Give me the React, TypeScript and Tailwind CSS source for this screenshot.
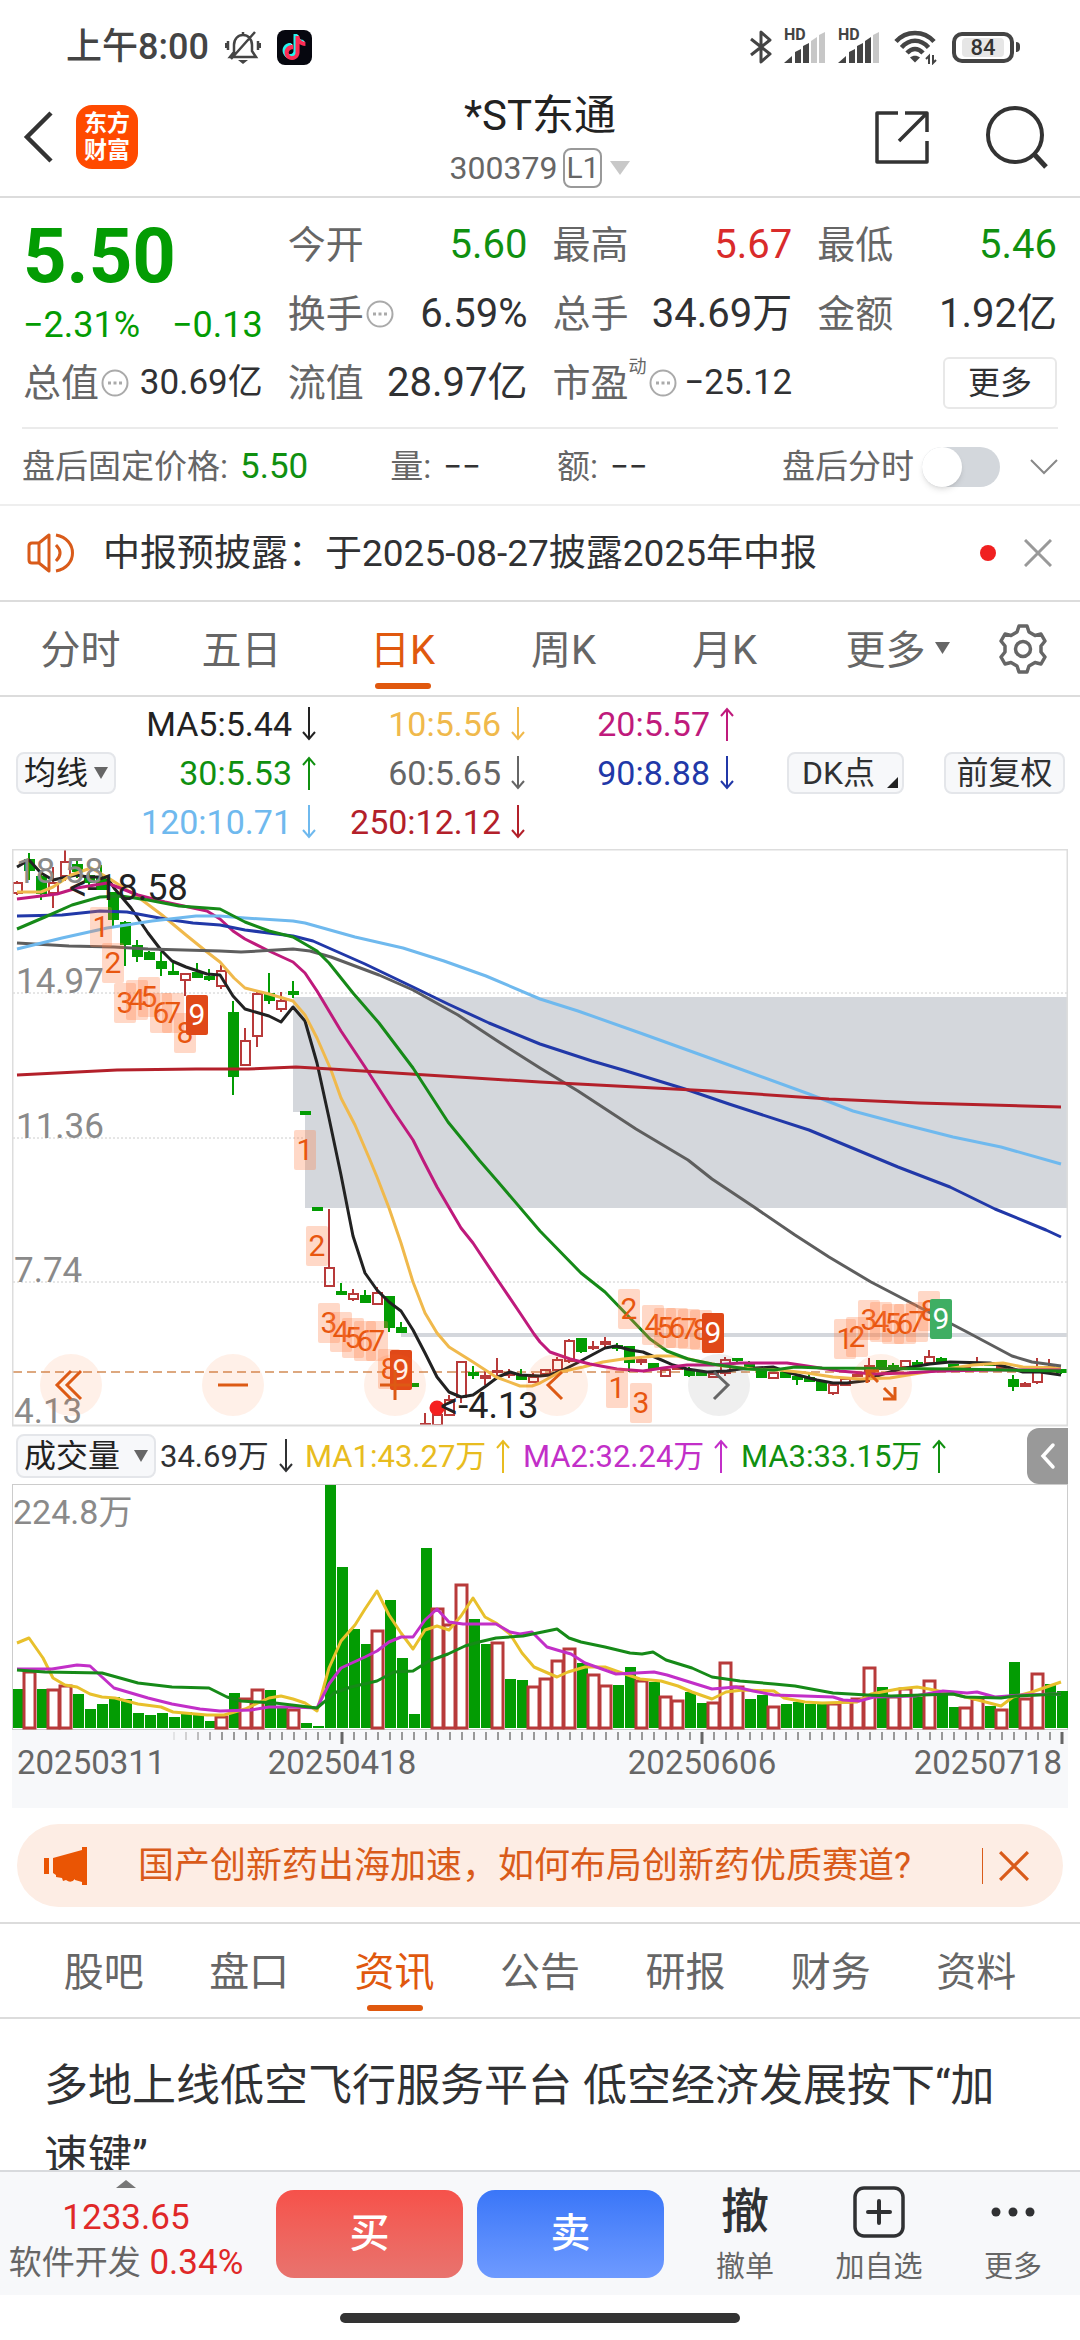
import { useState, type ReactNode } from 'react';
import { SiTiktok } from 'react-icons/si';

// ─── Data ─────────────────────────────────────────────────────────────────────

type Candle = [kind: 'r' | 'g', high: number, top: number, bottom: number, low: number];

const CANDLES: Candle[] = [
  ['r', 881, 883, 893, 895], ['g', 853, 860, 870, 880], ['g', 873, 877, 893, 900], ['r', 867, 883, 893, 908],
  ['r', 849, 862, 876, 881], ['g', 858, 865, 871, 878], ['g', 872, 876, 882, 885], ['g', 865, 877, 889, 890],
  ['g', 893, 893, 919, 927], ['g', 921, 923, 944, 966], ['g', 940, 946, 956, 962], ['g', 951, 953, 959, 959],
  ['g', 952, 962, 968, 976], ['g', 963, 972, 974, 975], ['r', 974, 974, 980, 996], ['g', 963, 973, 977, 978],
  ['g', 969, 977, 979, 981], ['r', 965, 971, 986, 989], ['g', 1001, 1013, 1076, 1095], ['r', 1028, 1041, 1065, 1065],
  ['r', 991, 994, 1036, 1047], ['g', 973, 994, 1000, 1004], ['r', 992, 1001, 1009, 1012], ['g', 981, 992, 994, 998],
  ['g', 1112, 1112, 1114, 1114], ['g', 1208, 1208, 1210, 1210], ['r', 1209, 1268, 1286, 1286], ['g', 1283, 1292, 1294, 1294],
  ['r', 1289, 1294, 1299, 1301], ['g', 1290, 1296, 1302, 1303], ['r', 1287, 1293, 1304, 1304], ['g', 1297, 1297, 1327, 1332],
  ['g', 1322, 1328, 1332, 1332], ['g', 1384, 1384, 1386, 1386], ['r', 1413, 1424, 1425, 1425], ['r', 1414, 1415, 1425, 1426],
  ['r', 1395, 1400, 1415, 1416], ['r', 1361, 1362, 1397, 1403], ['g', 1366, 1373, 1375, 1379], ['r', 1371, 1376, 1378, 1385],
  ['r', 1358, 1371, 1372, 1376], ['r', 1369, 1373, 1375, 1378], ['g', 1369, 1375, 1379, 1380], ['r', 1373, 1377, 1382, 1382],
  ['r', 1369, 1370, 1374, 1375], ['r', 1357, 1360, 1370, 1372], ['r', 1339, 1341, 1361, 1363], ['g', 1339, 1339, 1351, 1353],
  ['r', 1341, 1347, 1348, 1350], ['r', 1337, 1342, 1344, 1348], ['g', 1343, 1346, 1348, 1351], ['g', 1347, 1347, 1362, 1372],
  ['r', 1358, 1360, 1362, 1365], ['g', 1363, 1364, 1369, 1370], ['r', 1368, 1370, 1376, 1376], ['r', 1366, 1367, 1369, 1370],
  ['g', 1367, 1370, 1375, 1377], ['g', 1372, 1373, 1375, 1376], ['r', 1373, 1374, 1377, 1377], ['r', 1357, 1360, 1373, 1376],
  ['g', 1358, 1359, 1360, 1363], ['g', 1361, 1365, 1367, 1368], ['g', 1368, 1370, 1377, 1377], ['r', 1372, 1373, 1378, 1378],
  ['g', 1370, 1373, 1377, 1377], ['g', 1376, 1377, 1379, 1385], ['g', 1374, 1378, 1381, 1382], ['g', 1382, 1382, 1390, 1391],
  ['r', 1383, 1385, 1393, 1395], ['r', 1377, 1379, 1385, 1385], ['r', 1373, 1375, 1376, 1377], ['r', 1358, 1366, 1373, 1382],
  ['g', 1360, 1361, 1369, 1370], ['g', 1363, 1366, 1368, 1369], ['r', 1360, 1361, 1367, 1367], ['g', 1360, 1363, 1365, 1366],
  ['r', 1350, 1357, 1363, 1364], ['g', 1357, 1359, 1361, 1363], ['g', 1364, 1365, 1367, 1368], ['r', 1367, 1368, 1369, 1370],
  ['r', 1357, 1363, 1365, 1366], ['g', 1362, 1363, 1365, 1366], ['r', 1366, 1367, 1369, 1370], ['g', 1375, 1380, 1386, 1391],
  ['r', 1382, 1384, 1386, 1387], ['r', 1358, 1372, 1382, 1384], ['r', 1359, 1367, 1371, 1372], ['g', 1369, 1370, 1372, 1374],
];

const PRICE_LINES: { color: string; points: string }[] = [
  { color: '#222', points: '17,867 29,860 41,873 53,880 76,875 88,877 107,877 114,888 131,908 148,933 161,950 172,961 186,967 207,974 220,975 233,996 245,1009 269,1016 281,1022 293,1007 305,1021 317,1063 329,1118 341,1175 353,1236 365,1273 377,1290 389,1302 401,1311 413,1330 425,1353 437,1377 449,1392 461,1397 473,1395 486,1386 498,1377 510,1372 520,1375 540,1376 550,1375 563,1370 577,1363 590,1356 605,1348 616,1346 630,1350 643,1352 657,1358 673,1365 687,1369 707,1372 727,1371 740,1369 773,1367 790,1373 817,1380 833,1383 847,1383 863,1381 880,1375 900,1369 930,1364 950,1362 990,1363 1007,1367 1023,1372 1040,1372 1061,1375' },
  { color: '#f0b94c', points: '17,892 41,892 53,887 71,875 91,868 110,879 138,897 162,915 186,935 207,952 220,962 234,978 245,988 269,994 293,1001 305,1015 317,1038 331,1070 341,1098 355,1125 370,1160 377,1177 389,1208 401,1243 413,1282 425,1313 437,1333 449,1347 473,1362 496,1377 520,1386 532,1386 540,1383 560,1372 583,1367 603,1362 623,1359 657,1356 677,1356 697,1361 723,1366 753,1369 780,1370 807,1373 833,1377 860,1379 890,1378 920,1373 953,1368 973,1365 1003,1363 1023,1367 1061,1368' },
  { color: '#bf1a7c', points: '17,899 57,894 77,888 107,883 138,895 165,902 207,911 220,919 233,931 245,939 269,951 293,962 305,973 317,991 341,1031 365,1067 394,1112 413,1140 423,1160 437,1187 461,1228 473,1243 499,1282 520,1313 534,1334 540,1342 550,1352 570,1359 590,1364 617,1369 643,1371 663,1368 687,1365 713,1365 740,1363 787,1363 807,1366 840,1371 873,1374 907,1373 940,1371 990,1370 1061,1370' },
  { color: '#5e5e5e', points: '17,943 69,946 114,947 148,949 220,951 241,952 293,949 310,951 331,957 379,975 413,990 458,1015 499,1042 540,1068 578,1091 636,1129 688,1160 712,1179 754,1207 795,1235 829,1257 871,1282 919,1307 967,1332 1012,1356 1032,1362 1061,1366' },
  { color: '#2138a8', points: '17,916 62,915 100,911 127,912 165,919 193,923 220,925 245,930 293,936 313,941 365,964 413,987 448,1004 489,1023 540,1044 592,1061 623,1070 685,1089 729,1104 809,1130 898,1167 950,1187 995,1209 1046,1230 1061,1237' },
  { color: '#6fb9ee', points: '17,949 62,938 107,928 152,921 196,916 220,916 245,918 293,921 305,923 355,937 403,948 444,961 486,976 540,999 578,1011 643,1034 729,1065 809,1094 853,1111 898,1123 953,1137 1001,1147 1061,1164' },
  { color: '#b3202a', points: '17,1075 117,1070 196,1069 248,1069 296,1067 331,1069 540,1082 712,1091 829,1099 919,1103 1061,1107' },
  { color: '#168a18', points: '17,929 45,917 72,905 100,897 121,896 148,900 179,906 220,909 245,922 269,931 293,937 317,951 329,963 353,993 379,1023 413,1068 448,1122 479,1160 499,1183 540,1231 581,1273 605,1292 630,1318 650,1339 667,1351 688,1359 712,1364 747,1369 774,1370 795,1367 822,1368 953,1369 1061,1371' },
];

const MARKERS: [label: number, index: number, top: number, fill?: string][] = [
  [1, 7, 907], [2, 8, 943], [3, 9, 983], [4, 10, 980], [5, 11, 977], [6, 12, 993], [7, 13, 993], [8, 14, 1013], [9, 15, 995, '#e04818'],
  [1, 24, 1130], [2, 25, 1226], [3, 26, 1303], [4, 27, 1312], [5, 28, 1318], [6, 29, 1321], [7, 30, 1321], [8, 31, 1349], [9, 32, 1350, '#e04818'],
  [1, 50, 1368], [2, 51, 1289], [3, 52, 1383], [4, 53, 1305], [5, 54, 1308], [6, 55, 1308], [7, 56, 1309], [8, 57, 1310], [9, 58, 1313, '#e04818'],
  [1, 69, 1319], [2, 70, 1317], [3, 71, 1300], [4, 72, 1302], [5, 73, 1304], [6, 74, 1304], [7, 75, 1302], [8, 76, 1291], [9, 77, 1299, '#3fae63'],
];

const VOLUME_KINDS =
  'grgrrggggggggggggrgrrggrggggggrgggg' + 'rrrggrggrrrrgrrggrgrrggrrrggrggggrrrrgrrgrggrrgrgrrgg';

const VOLUME_TOPS = [
  1689, 1672, 1689, 1690, 1686, 1694, 1709, 1704, 1697, 1699, 1713, 1715, 1713, 1717, 1712, 1715, 1721, 1717, 1693, 1699,
  1690, 1690, 1707, 1710, 1723, 1726, 1485, 1567, 1629, 1644, 1631, 1600, 1658, 1714, 1548, 1609, 1625, 1585, 1619, 1644,
  1643, 1679, 1680, 1687, 1679, 1661, 1649, 1663, 1675, 1686, 1685, 1667, 1681, 1682, 1697, 1701, 1692, 1703, 1703, 1663,
  1687, 1699, 1695, 1707, 1704, 1702, 1704, 1702, 1704, 1702, 1699, 1668, 1687, 1697, 1689, 1697, 1681, 1694, 1707, 1708,
  1699, 1706, 1710, 1662, 1699, 1674, 1684, 1691,
];

const VOLUME_LINES: { color: string; points: string }[] = [
  { color: '#e8c02c', points: '17,1643 29,1638 43,1658 53,1678 65,1685 77,1687 90,1694 102,1697 115,1698 138,1704 161,1707 173,1712 207,1715 224,1715 245,1709 258,1703 269,1698 281,1696 293,1699 305,1703 317,1711 329,1668 341,1641 355,1625 365,1609 377,1591 389,1615 401,1633 413,1649 425,1630 437,1626 449,1630 461,1616 473,1598 485,1617 496,1623 510,1634 522,1653 534,1667 557,1677 568,1672 585,1667 605,1667 619,1672 640,1679 661,1681 678,1686 692,1692 712,1699 726,1692 743,1690 774,1691 784,1698 805,1702 822,1703 857,1702 871,1694 898,1689 917,1687 929,1689 953,1694 974,1699 1001,1706 1013,1697 1032,1692 1061,1682' },
  { color: '#c22fc8', points: '17,1669 52,1669 77,1665 90,1666 102,1677 114,1688 148,1698 172,1704 200,1709 220,1711 251,1710 269,1707 293,1707 317,1708 329,1684 341,1668 365,1657 377,1651 389,1642 401,1637 413,1637 425,1620 437,1609 449,1622 463,1624 496,1624 510,1632 520,1634 532,1632 547,1647 557,1650 571,1654 585,1663 616,1674 636,1673 654,1672 667,1675 712,1689 736,1687 753,1691 774,1695 833,1697 843,1700 859,1701 874,1697 915,1696 943,1691 967,1693 977,1692 995,1697 1022,1695 1061,1694' },
  { color: '#168a18', points: '17,1670 45,1672 102,1673 138,1683 172,1687 209,1688 227,1697 241,1701 275,1703 317,1708 324,1702 334,1693 351,1687 377,1681 394,1672 413,1671 429,1661 448,1654 465,1646 479,1642 496,1638 523,1636 557,1629 569,1638 581,1642 605,1647 630,1653 642,1654 653,1652 666,1660 692,1668 712,1677 740,1681 774,1684 795,1686 833,1693 867,1695 891,1696 953,1694 965,1697 1001,1698 1015,1696 1061,1694' },
];

const AVERAGES: { label: string; cls: string; up: boolean }[] = [
  { label: 'MA5:5.44', cls: 'text-[#222222]', up: false },
  { label: '10:5.56', cls: 'text-[#f0b94c]', up: false },
  { label: '20:5.57', cls: 'text-[#bf1a7c]', up: true },
  { label: '30:5.53', cls: 'text-[#109010]', up: true },
  { label: '60:5.65', cls: 'text-[#666666]', up: false },
  { label: '90:8.88', cls: 'text-[#2138a8]', up: false },
  { label: '120:10.71', cls: 'text-[#6fb9ee]', up: false },
  { label: '250:12.12', cls: 'text-[#b3202a]', up: false },
];

const RED = '#b83a3a';
const GREEN = '#039c03';
const xAt = (i: number) => 17 + i * 12;

// ─── App ──────────────────────────────────────────────────────────────────────

export default function App() {
  return (
    <div className="flex h-screen flex-col overflow-hidden bg-white font-[Roboto,'Noto_Sans_CJK_SC',sans-serif] leading-none text-[#303133]">
      <StatusBar />
      <Header />
      <main className="min-h-0 flex-1 overflow-y-auto [scrollbar-width:none]">
        <Quote />
        <AfterHours />
        <Notice />
        <PeriodTabs />
        <Averages />
        <PriceChart />
        <VolumePanel />
        <Banner />
        <InfoTabs />
        <article className="px-11 pt-8">
          <h2 className="text-[44px] leading-[71px]">多地上线低空飞行服务平台 低空经济发展按下“加速键”</h2>
        </article>
      </main>
      <TradeBar />
    </div>
  );
}

// ─── Top bars ─────────────────────────────────────────────────────────────────

function StatusBar() {
  return (
    <div className="flex h-[90px] shrink-0 items-center justify-between pr-[60px] pl-[66px] pt-1 text-[#444444]">
      <div className="flex items-center gap-4">
        <span className="text-4xl leading-none font-medium">上午8:00</span>
        <svg className="size-[36px]" viewBox="0 0 36 36" fill="none" stroke="currentColor" strokeWidth="2.5" aria-hidden="true">
          <path d="M18 3v3M9 26V16c0-6 4-10 9-10s9 4 9 10v6l4 6H5l4-5M30 3 6 30M3 12v9M33 12v9M0.8 14v5M35.2 14v5" />
          <path d="M13 31h10l-5 4z" fill="currentColor" stroke="none" />
        </svg>
        <span className="grid size-[35px] place-items-center rounded-lg bg-[#06070f]">
          <SiTiktok className="col-start-1 row-start-1 size-6 -translate-x-px -translate-y-px text-[#25f4ee]" aria-hidden="true" />
          <SiTiktok className="col-start-1 row-start-1 size-6 translate-x-px translate-y-px text-[#fe2c55]" aria-hidden="true" />
          <SiTiktok className="col-start-1 row-start-1 size-6 text-white" aria-hidden="true" />
        </span>
      </div>
      <div className="flex items-center">
        <svg className="h-9 w-[22px]" viewBox="0 0 22 36" fill="none" stroke="currentColor" strokeWidth="3" strokeLinejoin="round" aria-hidden="true">
          <path d="M1 10l19 15-9 8V3l9 8L1 26" />
        </svg>
        <Signal bars={3} />
        <Signal bars={4} />
        <svg className="ml-[14px] h-[36px] w-[44px]" viewBox="0 0 44 36" fill="none" stroke="currentColor" strokeWidth="4.5" aria-hidden="true">
          <path d="M2 12.500C12 1 30 1 40 12.500M7.500 18.500c8-9 19-9 27 0M13 24c5-5.500 11-5.500 16 0" />
          <path d="M16 28.500c3-2.500 7-2.500 10 0l-5 5z" fill="currentColor" stroke="none" />
          <path d="M35 35v-8l-3 3M39 26v8l3-3" strokeWidth="2" />
        </svg>
        <div className="ml-[14px] grid h-[31px] w-[62px] place-items-center rounded-[10px] border-4 border-current">
          <span className="w-[42px] rounded-sm bg-[#e6e6e6] text-center text-[22px] leading-[19px] font-medium text-[#333333]">84</span>
        </div>
        <span className="ml-0.5 h-2.5 w-1 rounded-r bg-current" />
      </div>
    </div>
  );
}

function Signal({ bars }: { bars: number }) {
  return (
    <div className="relative ml-3 h-[36px] w-[42px]">
      <svg className="absolute inset-0 size-full" viewBox="0 0 42 36" fill="currentColor" aria-hidden="true">
        <path d="M0 34l8-7v7z" />
        <path d="M11 23l6-3v14h-6z" />
        <path d="M19 17l6-3v20h-6z" />
        <path d="M27 12l6-4v26h-6z" opacity={bars > 3 ? 1 : 0.3} />
        <path d="M35 6l6-3v31h-6z" opacity="0.3" />
      </svg>
      <span className="absolute top-0 left-0 text-[16px] leading-3 font-bold">HD</span>
    </div>
  );
}

function Header() {
  return (
    <header className="relative flex h-[108px] shrink-0 items-center justify-between border-b-2 border-[#dcdcdc] pr-[30px] pb-3 pl-[22px]">
      <div className="flex items-center gap-[22px]">
        <button type="button" aria-label="返回">
          <svg className="h-[52px] w-8" viewBox="0 0 32 52" fill="none" stroke="#333" strokeWidth="4.5" aria-hidden="true">
            <path d="M29 2 5 26l24 24" />
          </svg>
        </button>
        <div className="flex h-[64px] w-[62px] flex-col items-center justify-center rounded-2xl bg-[#ff4a00] text-[23px] leading-[27px] font-bold text-white">
          <span>东方</span>
          <span>财富</span>
        </div>
      </div>
      <div className="absolute inset-x-0 top-1 mx-auto flex w-80 flex-col items-center">
        <h1 className="text-[42px] leading-[44px] text-[#222222]">*ST东通</h1>
        <button type="button" className="mt-2.5 flex items-center text-[32px] leading-[40px] text-[#666666]">
          300379
          <span className="ml-1.5 rounded-lg border-2 border-[#999999] px-px text-[30px] leading-[36px]">L1</span>
          <svg className="ml-2 h-[14px] w-5" viewBox="0 0 20 14" aria-hidden="true">
            <path d="M0 0h20L10 14z" fill="#c8c8c8" />
          </svg>
        </button>
      </div>
      <div className="flex items-center gap-[54px]">
        <button type="button" aria-label="分享">
          <svg className="size-[56px]" viewBox="0 0 56 56" fill="none" stroke="#333" strokeWidth="3.500" strokeLinejoin="round" aria-hidden="true">
            <path d="M24 4H3v49h50V32M31 4h22v19M53 4 25 32" />
          </svg>
        </button>
        <button type="button" aria-label="搜索">
          <svg className="size-[66px]" viewBox="0 0 66 66" fill="none" stroke="#333" strokeWidth="4" aria-hidden="true">
            <circle cx="31" cy="31" r="27" />
            <path d="M50 50l12 13" strokeWidth="5" />
          </svg>
        </button>
      </div>
    </header>
  );
}

// ─── Quote ────────────────────────────────────────────────────────────────────

function InfoDot() {
  return (
    <svg className="ml-0.5 size-7 shrink-0" viewBox="0 0 28 28" fill="none" stroke="#aaa" strokeWidth="2" aria-hidden="true">
      <circle cx="14" cy="14" r="12.500" />
      <path d="M7 14h3M12.500 14h3M18 14h3" strokeWidth="3" />
    </svg>
  );
}

function Cell({ label, info, sup, children, cls = 'text-[40px]' }: {
  label: string; info?: boolean; sup?: string; children: ReactNode; cls?: string;
}) {
  return (
    <div className="flex items-center">
      <span className="text-[38px] whitespace-nowrap text-[#666666]">{label}</span>
      {sup && <sup className="-top-4 text-lg leading-none text-[#666666]">{sup}</sup>}
      {info && <InfoDot />}
      <span className={`ml-auto whitespace-nowrap ${cls}`}>{children}</span>
    </div>
  );
}

function Quote() {
  return (
    <section className="px-[23px]">
      <div className="grid auto-rows-[69px] grid-cols-4 gap-x-[25px] pt-3 pb-2.5">
        <div className="row-span-2 text-[#039c03]">
          <div className="text-[76px] leading-[92px] font-bold">5.50</div>
          <div className="flex justify-between text-4xl leading-[46px]">
            <span>−2.31%</span>
            <span>−0.13</span>
          </div>
        </div>
        <Cell label="今开" cls="text-[40px] text-[#109010]">5.60</Cell>
        <Cell label="最高" cls="text-[40px] text-[#d92b2b]">5.67</Cell>
        <Cell label="最低" cls="text-[40px] text-[#109010]">5.46</Cell>
        <Cell label="换手" info>6.59%</Cell>
        <Cell label="总手">34.69万</Cell>
        <Cell label="金额">1.92亿</Cell>
        <Cell label="总值" info cls="text-[35px]">30.69亿</Cell>
        <Cell label="流值">28.97亿</Cell>
        <Cell label="市盈" sup="动" info cls="text-[35px]">−25.12</Cell>
        <button type="button" className="h-[52px] w-[114px] self-center justify-self-end rounded-md border-2 border-[#e8e8e8] text-[32px]">
          更多
        </button>
      </div>
    </section>
  );
}

function AfterHours() {
  const [on, setOn] = useState(false);
  return (
    <section className="border-b-2 border-[#eeeeee]">
      <div className="mx-[22px] flex h-[77px] items-center border-t-2 border-[#ebebeb] text-[33px] text-[#666666]">
        <span>盘后固定价格:</span>
        <span className="ml-3 text-[35px] text-[#109010]">5.50</span>
        <span className="ml-[82px]">量:</span>
        <span className="ml-3 text-[#333333]">−−</span>
        <span className="ml-[76px]">额:</span>
        <span className="ml-3 text-[#333333]">−−</span>
        <label htmlFor="after-hours" className="ml-auto">盘后分时</label>
        <span className="relative ml-2 h-[40px] w-[78px]">
          <input
            id="after-hours"
            type="checkbox"
            checked={on}
            onChange={(e) => setOn(e.target.checked)}
            className="peer size-full appearance-none rounded-full bg-[#d3d7dc] checked:bg-[#e0580e]"
          />
          <span className="pointer-events-none absolute top-0 left-0 size-10 rounded-full bg-white shadow-md peer-checked:left-auto peer-checked:right-0" />
        </span>
        <button type="button" aria-label="展开" className="ml-[30px]">
          <svg className="h-4 w-7" viewBox="0 0 28 16" fill="none" stroke="#888" strokeWidth="2" aria-hidden="true">
            <path d="M1 1l13 13L27 1" />
          </svg>
        </button>
      </div>
    </section>
  );
}

function Notice() {
  return (
    <section className="flex h-[96px] items-center border-b-2 border-[#dcdcdc] pr-[28px] pl-[27px]">
      <svg className="h-[42px] w-[48px]" viewBox="0 0 48 42" fill="none" stroke="#d95b1a" strokeWidth="3" strokeLinejoin="round" aria-hidden="true">
        <path d="M22 3v36L12 31H5q-3 0-3-3V14q0-3 3-3h7zM12 11v20M29 13q8 8 0 16M29 3c22 4 22 32 0 36" />
      </svg>
      <p className="ml-[28px] text-[37px]">中报预披露：于2025-08-27披露2025年中报</p>
      <span className="ml-auto size-4 rounded-full bg-[#f02020]" />
      <button type="button" aria-label="关闭" className="ml-7">
        <CloseIcon cls="size-7 text-[#999999]" />
      </button>
    </section>
  );
}

function CloseIcon({ cls }: { cls: string }) {
  return (
    <svg className={cls} viewBox="0 0 28 28" fill="none" stroke="currentColor" strokeWidth="3" aria-hidden="true">
      <path d="M1 1l26 26M27 1 1 27" />
    </svg>
  );
}

// ─── Tabs ─────────────────────────────────────────────────────────────────────

function Tab({ label, active, onClick, children }: {
  label: string; active: boolean; onClick: () => void; children?: ReactNode;
}) {
  return (
    <button
      type="button"
      role="tab"
      aria-selected={active}
      onClick={onClick}
      className={`relative flex h-full flex-1 items-center justify-center pt-1 text-[40px] ${active ? 'text-[#e0580e]' : 'text-[#666666]'}`}
    >
      {label}
      {children}
      {active && <span className="absolute bottom-1.5 left-1/2 h-1.5 w-14 -translate-x-1/2 rounded-full bg-[#e0580e]" />}
    </button>
  );
}

function PeriodTabs() {
  const [active, setActive] = useState('日K');
  return (
    <nav role="tablist" className="flex h-[95px] items-center border-b-2 border-[#dcdcdc]">
      {['分时', '五日', '日K', '周K', '月K', '更多'].map((label) => (
        <Tab key={label} label={label} active={label === active} onClick={() => setActive(label)}>
          {label === '更多' && (
            <svg className="absolute top-10 right-4 h-3 w-[15px]" viewBox="0 0 15 12" aria-hidden="true">
              <path d="M0 0h15L7.500 12z" fill="#666" />
            </svg>
          )}
        </Tab>
      ))}
      <button type="button" aria-label="设置" className="grid w-[114px] place-items-center">
        <svg className="h-[50px] w-[48px]" viewBox="0 0 48 50" fill="none" stroke="#666" strokeWidth="3.500" strokeLinejoin="round" aria-hidden="true">
          <path d="M20 2h8l2 6 6 3.500 6-1.500 4 7-4 5v6l4 5-4 7-6-1.500-6 3.500-2 6h-8l-2-6-6-3.500-6 1.500-4-7 4-5v-6l-4-5 4-7 6 1.500L18 8z" />
          <circle cx="24" cy="25" r="7.500" />
        </svg>
      </button>
    </nav>
  );
}

function InfoTabs() {
  const [active, setActive] = useState('资讯');
  return (
    <nav role="tablist" className="mt-[15px] flex h-[97px] items-center border-y-2 border-[#dcdcdc] px-[31px]">
      {['股吧', '盘口', '资讯', '公告', '研报', '财务', '资料'].map((label) => (
        <Tab key={label} label={label} active={label === active} onClick={() => setActive(label)} />
      ))}
    </nav>
  );
}

// ─── Moving averages ──────────────────────────────────────────────────────────

function Arrow({ up }: { up: boolean }) {
  return (
    <svg
      className={`ml-2.5 h-[34px] w-[14px] shrink-0 ${up ? 'rotate-180' : ''}`}
      viewBox="0 0 14 34"
      fill="none"
      stroke="currentColor"
      strokeWidth="2"
      aria-hidden="true"
    >
      <path d="M7 0v32M1 25l6 7 6-7" />
    </svg>
  );
}

function SelectBox({ label, cls, children }: { label: string; cls: string; children: ReactNode }) {
  return (
    <span className={`relative flex items-center ${cls}`}>
      <select
        aria-label={label}
        className="size-full appearance-none rounded-lg border-2 border-[#e4e6ea] bg-[#f7f8fa] pl-1.5 text-[32px] leading-none text-[#222222]"
      >
        {children}
      </select>
      <svg className="pointer-events-none absolute right-2 h-3 w-3.5" viewBox="0 0 14 12" aria-hidden="true">
        <path d="M0 0h14L7 12z" fill="#666" />
      </svg>
    </span>
  );
}

function Averages() {
  return (
    <section className="flex h-[152px] items-center pr-[15px] pl-4">
      <SelectBox label="指标" cls="h-[42px] w-[100px]">
        <option>均线</option>
      </SelectBox>
      <ul className="grid grid-cols-[200px_209px_209px] auto-rows-[49px]">
        {AVERAGES.map((a) => (
          <li key={a.label} className={`flex items-center justify-end text-[34px] ${a.cls}`}>
            {a.label}
            <Arrow up={a.up} />
          </li>
        ))}
      </ul>
      <button type="button" className="relative ml-auto h-[42px] w-[117px] rounded-lg border-2 border-[#e4e6ea] bg-[#f7f8fa] pr-3.5 text-[32px] leading-none">
        DK点
        <svg className="absolute right-1 bottom-1 size-[11px]" viewBox="0 0 11 11" aria-hidden="true">
          <path d="M11 0v11H0z" fill="#222" />
        </svg>
      </button>
      <button type="button" className="ml-10 h-[42px] w-[121px] rounded-lg border-2 border-[#e4e6ea] bg-[#f7f8fa] text-[32px] leading-none">
        前复权
      </button>
    </section>
  );
}

// ─── Price chart ──────────────────────────────────────────────────────────────

function PriceChart() {
  return (
    <section className="relative mx-3">
      <svg className="block w-full" viewBox="12 849 1056 579" role="img" aria-label="日K线图">
        {[993, 1138, 1282].map((y) => (
          <path key={y} d={`M13 ${y}H1067`} stroke="#ccc" strokeWidth="1" strokeDasharray="2 2" />
        ))}
        <path d="M293 997H1067V1208H305V1112H293z" fill="#d4d7dc" />
        <path d="M401 1333H1067V1337H401z" fill="#d4d7dc" />
        <path d="M13 1372H1067" stroke="#dda87f" strokeWidth="2" strokeDasharray="9 5" />
        {CANDLES.map(([kind, high, top, bottom, low], i) => (
          <g key={i} stroke={kind === 'r' ? RED : GREEN} strokeWidth="2" fill={kind === 'r' ? 'none' : GREEN}>
            <path d={`M${xAt(i)} ${high}V${top}M${xAt(i)} ${bottom}V${low}`} />
            <rect x={xAt(i) - 4} y={top} width="9" height={Math.max(bottom - top, 1)} />
          </g>
        ))}
        {PRICE_LINES.map((l) => (
          <polyline key={l.color} points={l.points} fill="none" stroke={l.color} strokeWidth="3" strokeLinejoin="round" />
        ))}
        <g fontSize="35" fill="#8a8a8a">
          <text x="16" y="883">18.58</text>
          <text x="16" y="993">14.97</text>
          <text x="16" y="1138">11.36</text>
          <text x="14" y="1282">7.74</text>
          <text x="14" y="1423">4.13</text>
        </g>
        <g fontSize="30" textAnchor="middle">
          {MARKERS.map(([label, index, top, fill]) => (
            <g key={`${index}-${top}`}>
              <rect x={xAt(index) - 11} y={top} width="22" height="40" rx="2" fill={fill ?? '#ff7f45'} fillOpacity={fill ? 1 : 0.3} />
              <text x={xAt(index)} y={top + 30} fill={fill ? '#fff' : '#e8560f'}>{label}</text>
            </g>
          ))}
        </g>
        <circle cx="437" cy="1408" r="7.500" fill="#f52020" />
        <g fontSize="36" fill="#222">
          <text x="69" y="900">&lt;-18.58</text>
          <text x="440" y="1418">&lt;-4.13</text>
        </g>
        <rect x="12.500" y="849.500" width="1055" height="576" fill="none" stroke="#ddd" strokeWidth="2" />
      </svg>
      <div className="absolute bottom-3 left-7 flex gap-[100px] text-[#dd5a14]">
        <RoundButton label="最早" cls="bg-[#ff7020]/10"><path d="M31 17 17 31l14 14M41 17 27 31l14 14" /></RoundButton>
        <RoundButton label="缩小" cls="bg-[#ff7020]/10"><path d="M16 31h30" /></RoundButton>
        <RoundButton label="放大" cls="bg-[#ff7020]/10"><path d="M16 31h30M31 16v30" /></RoundButton>
        <RoundButton label="左移" cls="bg-[#ff7020]/10"><path d="M36 18 22 31l14 14" /></RoundButton>
        <RoundButton label="右移" cls="bg-[#666666]/10 text-[#666666]"><path d="M26 18l14 13-14 14" /></RoundButton>
        <RoundButton label="全屏" cls="bg-[#ff7020]/10"><path d="M28 28 17 17M17 29V17h12M34 34l11 11M45 33v12H33" /></RoundButton>
      </div>
    </section>
  );
}

function RoundButton({ label, cls, children }: { label: string; cls: string; children: ReactNode }) {
  return (
    <button type="button" aria-label={label} className={`size-[62px] rounded-full ${cls}`}>
      <svg viewBox="0 0 62 62" fill="none" stroke="currentColor" strokeWidth="3" aria-hidden="true">{children}</svg>
    </button>
  );
}

// ─── Volume ───────────────────────────────────────────────────────────────────

function VolumePanel() {
  return (
    <section className="mx-3">
      <div className="flex h-[56px] items-center text-[31px]">
        <SelectBox label="副图指标" cls="ml-1 h-[44px] w-[140px]">
          <option>成交量</option>
        </SelectBox>
        <span className="ml-1 flex w-[145px] items-center">34.69万<Arrow up={false} /></span>
        <span className="flex w-[218px] items-center text-[#e8bc20]">MA1:43.27万<Arrow up /></span>
        <span className="flex w-[218px] items-center text-[#c22fc8]">MA2:32.24万<Arrow up /></span>
        <span className="flex items-center text-[#109010]">MA3:33.15万<Arrow up /></span>
        <button type="button" aria-label="展开指标" className="ml-auto grid h-[56px] w-[41px] place-items-center rounded-l-xl bg-[#999999]">
          <svg className="h-7 w-4" viewBox="0 0 16 28" fill="none" stroke="#fff" strokeWidth="3.500" strokeLinecap="round" aria-hidden="true">
            <path d="M13 3 3 14l10 11" />
          </svg>
        </button>
      </div>
      <svg className="block w-full" viewBox="12 1484 1056 324" role="img" aria-label="成交量图">
        <rect x="12" y="1730" width="1056" height="78" fill="#f7f8fa" />
        <rect x="12.500" y="1484.500" width="1055" height="245" fill="none" stroke="#ccc" />
        <text x="13" y="1524" fontSize="34" fill="#8a8a8a">224.8万</text>
        {VOLUME_TOPS.map((top, i) =>
          VOLUME_KINDS[i] === 'r' ? (
            <rect key={i} x={xAt(i) - 5} y={top} width="11" height={1728 - top} fill="#fff" stroke={RED} strokeWidth="3" />
          ) : (
            <rect key={i} x={xAt(i) - 4} y={top} width="11" height={1728 - top} fill={GREEN} />
          ),
        )}
        {VOLUME_LINES.map((l) => (
          <polyline key={l.color} points={l.points} fill="none" stroke={l.color} strokeWidth="3" strokeLinejoin="round" />
        ))}
        {Array.from({ length: 75 }, (_, k) => k + 13).map((i) => {
          const major = i === 27 || i === 57 || i === 87;
          return (
            <path
              key={i}
              d={`M${xAt(i) + 1} 1732V${major ? 1744 : 1740}`}
              stroke={major ? '#666' : '#999'}
              strokeWidth={major ? 3 : 2}
              opacity={Math.min(1, (i - 12) / 5)}
            />
          );
        })}
        <g fontSize="33" fill="#666">
          <text x="17" y="1774">20250311</text>
          <text x="342" y="1774" textAnchor="middle">20250418</text>
          <text x="702" y="1774" textAnchor="middle">20250606</text>
          <text x="1062" y="1774" textAnchor="end">20250718</text>
        </g>
      </svg>
    </section>
  );
}

function Banner() {
  return (
    <section className="mx-[17px] mt-4 flex h-[83px] items-center rounded-full bg-[#fdede4] pr-[34px] pl-[27px] text-[#d95b1a]">
      <svg className="h-[38px] w-[44px]" viewBox="0 0 44 38" fill="#ea5504" aria-hidden="true">
        <path d="M0 11h5v16H0zM9 11 38 3V0h5v38h-5v-3l-7-2v-1q-4 5-9 1l-3 1-1-3-6-1v-2L9 26z" />
      </svg>
      <p className="ml-[50px] text-4xl leading-none">国产创新药出海加速，如何布局创新药优质赛道?</p>
      <span className="ml-auto h-9 w-px bg-current" />
      <button type="button" aria-label="关闭" className="ml-4">
        <CloseIcon cls="size-[30px]" />
      </button>
    </section>
  );
}

// ─── Trade bar ────────────────────────────────────────────────────────────────

function TradeBar() {
  return (
    <footer className="shrink-0">
      <div className="relative flex h-[125px] items-center border-t-2 border-[#d8dadd] bg-[#f7f8fa]">
        <svg className="absolute top-2 left-[116px] h-2 w-5" viewBox="0 0 20 8" aria-hidden="true">
          <path d="M0 8 10 0l10 8z" fill="#777" />
        </svg>
        <div className="mt-3 flex w-[262px] flex-col items-center gap-2.5 pr-2.5 text-[#e02828]">
          <span className="text-[35px]">1233.65</span>
          <span className="text-[35px] whitespace-nowrap"><span className="text-[33px] text-[#666666]">软件开发</span> 0.34%</span>
        </div>
        <button type="button" className="ml-3.5 h-[88px] w-[187px] rounded-[18px] bg-linear-to-b from-[#f6514a] to-[#e8736e] text-[40px] font-medium text-white">
          买
        </button>
        <button type="button" className="ml-3.5 h-[88px] w-[187px] rounded-[18px] bg-linear-to-b from-[#3a76f8] to-[#6e9aff] text-[40px] font-medium text-white">
          卖
        </button>
        <div className="ml-3.5 grid flex-1 grid-cols-3">
          <Action label="撤单"><span className="text-5xl leading-none font-medium">撤</span></Action>
          <Action label="加自选">
            <svg className="size-[52px]" viewBox="0 0 52 52" fill="none" stroke="currentColor" strokeWidth="3.500" aria-hidden="true">
              <rect x="2" y="2" width="48" height="48" rx="9" />
              <path d="M26 15v22M15 26h22" strokeWidth="4" strokeLinecap="round" />
            </svg>
          </Action>
          <Action label="更多">
            <svg className="h-2.5 w-[44px]" viewBox="0 0 44 10" fill="currentColor" aria-hidden="true">
              <circle cx="5" cy="5" r="4.500" />
              <circle cx="22" cy="5" r="4.500" />
              <circle cx="39" cy="5" r="4.500" />
            </svg>
          </Action>
        </div>
      </div>
      <div className="flex h-[45px] items-center justify-center bg-white">
        <span className="h-2.5 w-[400px] rounded-full bg-[#333333]" />
      </div>
    </footer>
  );
}

function Action({ label, children }: { label: string; children: ReactNode }) {
  return (
    <button type="button" className="flex flex-col items-center text-[#303133]">
      <span className="flex h-[54px] items-center">{children}</span>
      <span className="mt-3.5 text-[29px] text-[#666666]">{label}</span>
    </button>
  );
}
